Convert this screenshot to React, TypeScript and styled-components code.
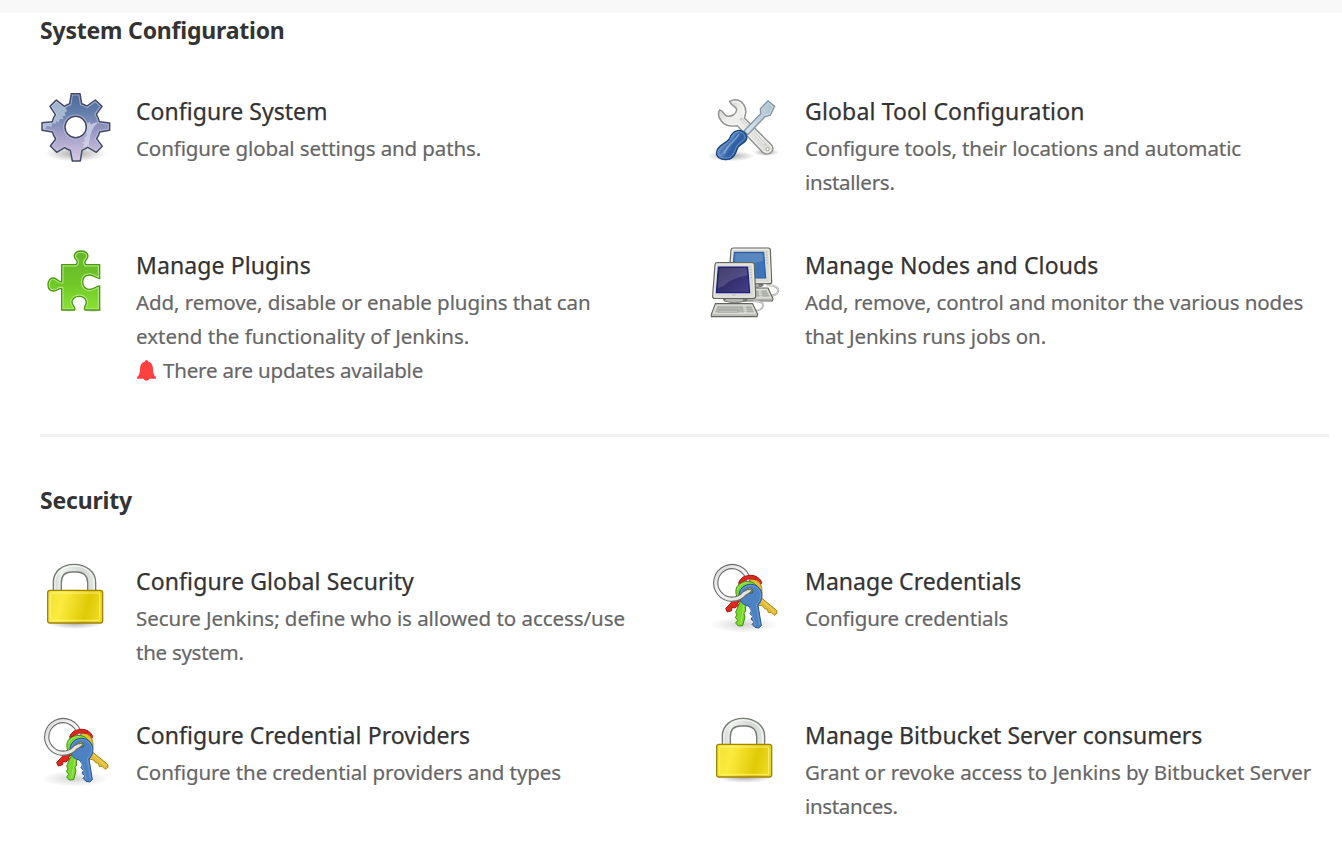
import React from 'react';
import styled, { createGlobalStyle } from 'styled-components';

const GlobalStyle = createGlobalStyle`
  *, *::before, *::after { box-sizing: border-box; }
  body {
    margin: 0;
    background: #fff;
    color: #333;
    font-family: "Noto Sans", "Open Sans", sans-serif;
  }
`;

const Page = styled.div`
  height: 845px;
  overflow: hidden;
`;

const TopBar = styled.div`
  height: 13px;
  background: #f8f8f8;
`;

const Main = styled.main`
  padding: 0 13px 0 40px;
`;

const Section = styled.section`
  & + & {
    margin-top: 47px;
    border-top: 3px solid #f1f1f1;
    padding-top: 46px;
  }
`;

const Heading = styled.h2`
  margin: 0 0 44px;
  font-size: 23px;
  font-weight: 700;
  line-height: 34px;
  letter-spacing: -0.2px;
`;

const Grid = styled.div`
  display: grid;
  grid-template-columns: 1fr 1fr;
  column-gap: 49px;
  row-gap: 46px;
`;

const Item = styled.a`
  display: flex;
  gap: 24px;
`;

const Icon = styled.svg`
  flex: none;
  width: 72px;
  height: 72px;
  overflow: visible;
`;

const Text = styled.dl`
  margin: 0;
`;

const Title = styled.dt<{ $track?: number }>`
  font-size: 23px;
  line-height: 40px;
  letter-spacing: ${p => p.$track ?? 0.09}px;
  -webkit-text-stroke: 0.25px currentColor;
  white-space: nowrap;
`;

const Line = styled.dd<{ $track?: number }>`
  display: flex;
  align-items: center;
  margin: 0;
  color: #666;
  font-size: 20.5px;
  line-height: 34px;
  letter-spacing: ${p => p.$track ?? -0.085}px;
  -webkit-text-stroke: 0.2px currentColor;
  white-space: nowrap;
`;

const Bell = styled.svg`
  width: 20px;
  height: 22px;
  margin-right: 7px;
`;

function Gear() {
  const d =
    'M124 35H150L155 65Q163 67 171 72L196 54L216 73L199 97Q205 106 208 119L239 123V145L209 150Q206 161 200 170L217 193L199 211L173 196Q165 201 156 205L151 237H127L121 205Q112 203 104 197L80 211L61 192L77 171Q70 160 67 150L36 145V122L67 119Q70 107 76 98L60 73L79 54L103 73Q110 68 119 65Z M137 103A32 32 0 1 0 137 167A32 32 0 1 0 137 103Z';
  return (
    <Icon viewBox="30 27 216 216">
      <defs>
        <linearGradient id="gear" x1="0" y1="0" x2="0" y2="1">
          <stop offset="0" stopColor="#4a6797" />
          <stop offset=".3" stopColor="#6680ad" />
          <stop offset=".6" stopColor="#a09ec6" />
          <stop offset="1" stopColor="#d9c7e3" />
        </linearGradient>
        <radialGradient id="shadow">
          <stop offset="0" stopColor="#000" stopOpacity=".34" />
          <stop offset=".55" stopColor="#000" stopOpacity=".15" />
          <stop offset="1" stopColor="#000" stopOpacity="0" />
        </radialGradient>
        <clipPath id="gearClip"><path d={d} clipRule="evenodd" /></clipPath>
      </defs>
      <ellipse cx="137" cy="215" rx="92" ry="24" fill="url(#shadow)" />
      <path d={d} fill="url(#gear)" fillRule="evenodd" />
      <g clipPath="url(#gearClip)">
        <path d="M30 27H112V74L105 78L112 86L104 92L107 101L97 103L101 112L90 111L86 122L80 117L76 126L67 122L64 135L51 132L47 140L30 140Z" fill="#bccbdc" opacity=".75" />
        <path d="M169 120L173 125L179 119L183 128L190 124L207 120Q179 137 176 196H158L163 187L156 182L165 177L162 168L170 161L169 149L163 142L170 137Z" fill="#d3d8e9" opacity=".75" />
        <path d={d} fill="none" stroke="#c5d0e1" strokeWidth="11" opacity=".6" />
      </g>
      <path d={d} fill="none" stroke="#454767" strokeWidth="4.4" strokeLinejoin="round" />
    </Icon>
  );
}

function Tools() {
  return (
    <Icon viewBox="27 27 216 216">
      <defs>
        <linearGradient id="wrench" x1="0" y1="0" x2="1" y2="1">
          <stop offset="0" stopColor="#c9ccc8" />
          <stop offset=".3" stopColor="#f0f0ef" />
          <stop offset="1" stopColor="#d9dbd7" />
        </linearGradient>
        <linearGradient id="handle" x1="0" y1="0" x2="1" y2=".6">
          <stop offset="0" stopColor="#3567ac" />
          <stop offset=".45" stopColor="#7095ca" />
          <stop offset=".6" stopColor="#3768ab" />
          <stop offset="1" stopColor="#28579b" />
        </linearGradient>
        <linearGradient id="blade" x1="0" y1="0" x2="1" y2="0">
          <stop offset="0" stopColor="#dce5ed" />
          <stop offset="1" stopColor="#abbfce" />
        </linearGradient>
      </defs>
      <ellipse cx="92" cy="222" rx="72" ry="16" fill="url(#shadow)" />
      <ellipse cx="198" cy="211" rx="40" ry="11" fill="url(#shadow)" />
      <path d="M89 58C105 49 123 54 131 67C139 80 139 95 133 108L214 188C229 205 205 226 188 211L112 131C94 134 75 132 64 117C55 106 53 94 59 84C69 84 70 98 81 102C94 105 108 97 110 84C110 71 91 73 89 58Z" fill="url(#wrench)" stroke="#939590" strokeWidth="4.500" strokeLinejoin="round" />
      <path d="M97 59C113 56 125 64 130 79C134 94 131 102 128 109L210 190C221 204 202 217 191 207L114 127C94 131 78 127 67 114" fill="none" stroke="#fff" strokeWidth="3" opacity=".7" />
      <path d="M124 112L194 187" fill="none" stroke="#c9cbc7" strokeWidth="9" strokeLinecap="round" />
      <path d="M126 115L192 185" fill="none" stroke="#e9e9e8" strokeWidth="5" strokeLinecap="round" />
      <circle cx="203" cy="201" r="5" fill="#fff" stroke="#a0a29f" strokeWidth="3" />
      <path d="M204 56L224 73L211 100L195 104L143 158L132 147L182 95L181 80Z" fill="url(#blade)" stroke="#8598a6" strokeWidth="4" strokeLinejoin="round" />
      <path d="M205 62L218 74L208 96L193 99" fill="none" stroke="#d5e0e8" strokeWidth="2.5" />
      <path d="M112 146C126 142 142 155 140 169C138 184 118 186 113 198C107 213 101 231 83 232C61 235 47 224 50 209C52 188 81 185 89 169C94 155 99 149 112 146Z" fill="url(#handle)" stroke="#1b467f" strokeWidth="4" />
      <path d="M113 150C125 148 137 157 135 168C132 178 115 181 109 195C103 210 97 226 82 228C64 230 52 221 54 210C57 195 84 187 94 171C98 158 103 152 113 150Z" fill="none" stroke="#6b93c8" strokeWidth="3" />
      <path d="M111 160C98 180 73 191 61 213M124 165C106 179 101 201 85 219" fill="none" stroke="#2f5c9e" strokeWidth="7" strokeLinecap="round" opacity=".5" />
      <path d="M116 158C103 179 83 187 73 213" fill="none" stroke="#8aabd8" strokeWidth="5" strokeLinecap="round" opacity=".8" />
    </Icon>
  );
}

function Puzzle() {
  const d =
    'M80 79H123Q131 69 121 62C112 48 124 38 138 38C153 38 164 48 156 61Q146 70 152 79H194V121C181 119 176 109 163 110C150 111 143 118 143 131C143 145 152 154 164 153C178 153 183 143 194 143V215H150C143 204 158 199 153 187C150 177 141 174 132 174C121 174 112 181 111 190C110 201 123 204 119 215H80V151C68 149 67 159 55 158C44 157 39 149 39 139C39 128 45 119 55 119C66 119 70 132 80 130Z';
  return (
    <Icon viewBox="15 20 216 216">
      <defs>
        <linearGradient id="puzzle" x1="0" y1="0" x2="0" y2="1">
          <stop offset="0" stopColor="#65b52a" />
          <stop offset=".55" stopColor="#6fc827" />
          <stop offset="1" stopColor="#8ae234" />
        </linearGradient>
        <clipPath id="puzzleClip"><path d={d} /></clipPath>
      </defs>
      <ellipse cx="100" cy="214" rx="28" ry="7" fill="url(#shadow)" />
      <ellipse cx="174" cy="214" rx="32" ry="8" fill="url(#shadow)" />
      <path d={d} fill="url(#puzzle)" />
      <path d={d} clipPath="url(#puzzleClip)" fill="none" stroke="#aee57f" strokeWidth="11" />
      <path d={d} fill="none" stroke="#4b9a0d" strokeWidth="4" strokeLinejoin="round" />
    </Icon>
  );
}

function Monitor({ screen, frame }: { screen: string; frame: string }) {
  return (
    <>
      <ellipse cx="106" cy="184" rx="37" ry="9" fill="#777973" />
      <path d="M81 177H125L132 188Q105 198 73 188Z" fill="#b5b6b1" stroke="#73756f" strokeWidth="2" />
      <path d="M51 73H157Q163 73 163 79L167 174Q167 180 161 180H44Q37 180 38 173L45 79Q46 73 51 73Z" fill="#dcdcd7" stroke="#63655f" strokeWidth="3.6" />
      <path d="M52 77H156Q159 77 159 81L163 173Q163 177 158 177H47Q41 177 42 172L49 81Q49 77 52 77Z" fill="none" stroke="#f4f4f1" strokeWidth="2.2" />
      <path d="M55 86H143L149 163H49Z" fill={screen} stroke={frame} strokeWidth="3.4" />
      <path d="M58 89H139L142 111Q95 119 72 142L54 150Z" fill="#fff" opacity=".15" />
      <path d="M150 86H153M150 94H154M151 102H155M151 110H155M152 118H156" stroke="#a3a59e" strokeWidth="2.4" />
      <path d="M97 168L102 172L108 167" stroke="#9b9b95" strokeWidth="1.5" fill="none" />
    </>
  );
}

function Keyboard() {
  return (
    <>
      <path d="M46 196H158L173 228L171 235H34V228Z" fill="#d8d8d3" stroke="#62645e" strokeWidth="3.4" strokeLinejoin="round" />
      <path d="M35 230H171" stroke="#a5a7a1" strokeWidth="3" />
      <path d="M52 201H130L134 224H43ZM136 201H154L165 224H140Z" fill="#b9bbb5" stroke="#e9e9e5" strokeWidth="2" />
      <path d="M50 207H155M48 213H159M46 219H162M66 217H112" stroke="#979a93" strokeWidth="1.3" />
      <path d="M57 216H113V222H55Z" fill="#c4c5c0" stroke="#8f918b" strokeWidth="1.3" />
    </>
  );
}

function Computers() {
  return (
    <Icon viewBox="27 20 216 216">
      <defs>
        <linearGradient id="blueScreen" x1="0" y1="0" x2="1" y2="1">
          <stop offset="0" stopColor="#3a71b2" />
          <stop offset="1" stopColor="#3d76bd" />
        </linearGradient>
        <linearGradient id="darkScreen" x1="0" y1="0" x2="1" y2="1">
          <stop offset="0" stopColor="#201b50" />
          <stop offset="1" stopColor="#46418b" />
        </linearGradient>
      </defs>
      <path d="M200 141C223 139 238 149 234 160C230 170 218 173 211 170" fill="none" stroke="#aaaca7" strokeWidth="6" />
      <path d="M200 141C223 139 238 149 234 160C230 170 218 173 211 170" fill="none" stroke="#dededb" strokeWidth="3" />
      <g transform="translate(46 -47)"><Keyboard /></g>
      <g transform="translate(48 -44)"><Monitor screen="url(#blueScreen)" frame="#2c5da0" /></g>
      <path d="M160 189C178 187 192 194 189 204Q183 216 165 217" fill="none" stroke="#aaaca7" strokeWidth="6" />
      <path d="M160 189C178 187 192 194 189 204Q183 216 165 217" fill="none" stroke="#dededb" strokeWidth="3" />
      <Monitor screen="url(#darkScreen)" frame="#1c1f80" />
      <Keyboard />
    </Icon>
  );
}

function Lock() {
  const shackle = 'M55 112V80C55 49 83 28 117 28C153 28 182 50 182 82V112H158V83C158 63 145 51 126 51H110C89 51 79 64 79 83V112Z';
  return (
    <Icon viewBox="15 18 216 216">
      <defs>
        <linearGradient id="lockBody" x1="0" y1="0" x2="1" y2=".15">
          <stop offset="0" stopColor="#f1e030" />
          <stop offset=".3" stopColor="#fbeb3e" />
          <stop offset=".78" stopColor="#e0ca06" />
          <stop offset="1" stopColor="#ebd81d" />
        </linearGradient>
        <linearGradient id="steel" x1="0" y1="0" x2="1" y2="0">
          <stop offset="0" stopColor="#cbd0cb" />
          <stop offset=".2" stopColor="#f0f2f0" />
          <stop offset=".7" stopColor="#d3d8d3" />
          <stop offset="1" stopColor="#e4e7e3" />
        </linearGradient>
      </defs>
      <ellipse cx="121" cy="204" rx="84" ry="18" fill="url(#shadow)" />
      <path d={shackle} fill="url(#steel)" stroke="#777b76" strokeWidth="4" />
      <path d="M60 105V80C60 54 84 33 117 33C149 33 177 53 177 82V105" fill="none" stroke="#fafbf9" strokeWidth="3" />
      <rect x="38" y="106" width="165" height="98" rx="7" fill="url(#lockBody)" stroke="#a18308" strokeWidth="4" />
      <rect x="47" y="114" width="147" height="82" rx="2" fill="none" stroke="#fff69b" strokeWidth="3" opacity=".75" />
    </Icon>
  );
}

function Keys() {
  const ring = 'M144 72A49 49 0 1 0 134 114Q143 110 149 104';
  return (
    <Icon viewBox="27 17 216 216">
      <defs>
        <linearGradient id="ring" x1="0" y1="0" x2="1" y2="1">
          <stop offset="0" stopColor="#d8d8d8" />
          <stop offset=".5" stopColor="#f7f7f7" />
          <stop offset="1" stopColor="#dcdcdb" />
        </linearGradient>
      </defs>
      <ellipse cx="132" cy="208" rx="101" ry="24" fill="url(#shadow)" opacity=".5" />
      <g strokeWidth="3" strokeLinejoin="round">
        <path d="M117 83C121 68 135 60 150 60C167 60 181 69 185 82L172 110L113 142L116 150L104 158L96 156L95 166L82 170L77 160L93 142L114 115Z" fill="#dc2a20" stroke="#a9130c" />
        <path d="M124 85C134 71 153 67 169 75C186 84 190 106 182 126L230 165L231 174L222 180L213 171L205 172L202 162L194 160L188 152L172 149L157 117Z" fill="#e1bd3c" stroke="#b18811" />
        <path d="M182 131L224 170" stroke="#f0d56b" fill="none" />
        <path d="M108 103C110 89 125 78 142 78C160 78 172 89 175 103L155 135L136 155L137 167L132 175L135 185L128 211L115 212L107 203L113 195L106 186L111 179L107 170L116 150L121 139C111 129 106 116 108 103Z" fill="#79d92e" stroke="#42920e" />
        <path d="M132 149L122 206M112 103C116 89 131 82 145 82" stroke="#a4e768" fill="none" />
        <path d="M152 87C172 87 186 102 186 120C186 134 180 143 174 149L184 211L176 218L165 216L156 207L163 200L153 192L158 183L150 175L155 166L145 152C128 149 117 136 117 120C117 102 132 87 152 87Z" fill="#4c82c3" stroke="#285691" />
        <path d="M122 112C127 97 139 91 152 91C169 91 182 104 182 120C182 134 175 140 169 147L179 209M150 156L166 211" fill="none" stroke="#6c9bd2" />
      </g>
      <ellipse cx="152" cy="108" rx="7" ry="6" fill="#395346" stroke="#264d75" strokeWidth="2" />
      <path d={ring} fill="none" stroke="#6a6c69" strokeWidth="16" strokeLinecap="round" />
      <path d={ring} fill="none" stroke="url(#ring)" strokeWidth="9.500" strokeLinecap="round" />
      <path d="M116 82C121 68 135 60 150 60C157 60 164 62 170 65L166 73C151 68 134 72 124 82Z" fill="#dc2a20" stroke="#a9130c" strokeWidth="2" />
      <path d="M142 104Q151 99 157 106L151 113" fill="none" stroke="#66814a" strokeWidth="4" />
    </Icon>
  );
}

export default function App() {
  return (
    <Page>
      <GlobalStyle />
      <TopBar />
      <Main>
        <Section>
          <Heading>System Configuration</Heading>
          <Grid>
            <Item>
              <Gear />
              <Text>
                <Title $track={0.04}>Configure System</Title>
                <Line $track={-0.11}>Configure global settings and paths.</Line>
              </Text>
            </Item>
            <Item>
              <Tools />
              <Text>
                <Title $track={0.16}>Global Tool Configuration</Title>
                <Line $track={-0.1}>Configure tools, their locations and automatic</Line>
                <Line $track={-0.27}>installers.</Line>
              </Text>
            </Item>
            <Item>
              <Puzzle />
              <Text>
                <Title $track={0.1}>Manage Plugins</Title>
                <Line $track={-0.075}>Add, remove, disable or enable plugins that can</Line>
                <Line $track={0.02}>extend the functionality of Jenkins.</Line>
                <Line $track={-0.2}>
                  <Bell viewBox="-0.5 -0.5 20 22">
                    <path fill="#ff4040" d="M10 .5a1.600 1.600 0 0 1 1.600 1.600C15 3 16.500 5.800 16.500 9.500c0 4 1 6.600 2.900 8.100v1.700H.6v-1.700C2.500 16.100 3.500 13.500 3.500 9.500 3.500 5.800 5 3 8.400 2.100A1.600 1.600 0 0 1 10 .5zM7.300 18.500h5.400a2.700 2.800 0 0 1-5.400 0z" />
                  </Bell>
                  There are updates available
                </Line>
              </Text>
            </Item>
            <Item>
              <Computers />
              <Text>
                <Title $track={0.13}>Manage Nodes and Clouds</Title>
                <Line $track={-0.1}>Add, remove, control and monitor the various nodes</Line>
                <Line $track={-0.08}>that Jenkins runs jobs on.</Line>
              </Text>
            </Item>
          </Grid>
        </Section>
        <Section>
          <Heading>Security</Heading>
          <Grid>
            <Item>
              <Lock />
              <Text>
                <Title $track={0.13}>Configure Global Security</Title>
                <Line $track={-0.05}>Secure Jenkins; define who is allowed to access/use</Line>
                <Line $track={-0.27}>the system.</Line>
              </Text>
            </Item>
            <Item>
              <Keys />
              <Text>
                <Title $track={0.02}>Manage Credentials</Title>
                <Line $track={-0.14}>Configure credentials</Line>
              </Text>
            </Item>
            <Item>
              <Keys />
              <Text>
                <Title>Configure Credential Providers</Title>
                <Line>Configure the credential providers and types</Line>
              </Text>
            </Item>
            <Item>
              <Lock />
              <Text>
                <Title $track={0.02}>Manage Bitbucket Server consumers</Title>
                <Line $track={-0.05}>Grant or revoke access to Jenkins by Bitbucket Server</Line>
                <Line $track={-0.35}>instances.</Line>
              </Text>
            </Item>
          </Grid>
        </Section>
      </Main>
    </Page>
  );
}
